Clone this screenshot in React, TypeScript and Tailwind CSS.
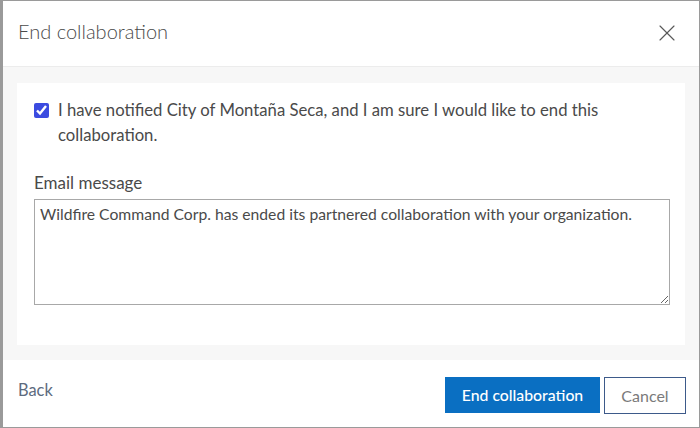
import { X } from "lucide-react";

export default function App() {
  return (
    <div
      className="flex h-[428px] w-[700px] flex-col border border-l-[3px] border-[#9a9a9a] bg-white text-[#4a4a4a]"
      style={{ fontFamily: "Lato, 'Open Sans', sans-serif" }}
    >
      <div className="flex h-[66px] shrink-0 items-center justify-between border-b border-[#ececec] pl-[15px] pr-[18px]">
        <h1 className="mb-[5px] text-[20px] font-light text-[#4a4a4a]">End collaboration</h1>
        <X className="mb-[2px] h-[28px] w-[28px] text-[#595959]" strokeWidth={1} />
      </div>

      <div className="h-[293px] shrink-0 bg-[#f7f7f7] px-[14px] pt-[16px] pb-[15px]">
        <div className="h-full bg-white pl-[17px] pr-[16px] pt-[15px]">
          <label className="flex items-start gap-[9px]">
            <input
              type="checkbox"
              defaultChecked
              className="mt-[5px] h-[15px] w-[15px] shrink-0 accent-[#3b4be0]"
            />
            <span className="text-[16.7px] leading-[25px]">
              I have notified City of Montaña Seca, and I am sure I would like to end this collaboration.
            </span>
          </label>

          <div className="mt-[24px] text-[17px] leading-[22px]">Email message</div>
          <textarea
            className="mt-[5px] block h-[106px] w-[636px] border border-[#a8a8a8] px-[5px] py-[3px] text-[15.7px] leading-[22px] text-[#4a4a4a] outline-none"
            defaultValue="Wildfire Command Corp. has ended its partnered collaboration with your organization."
          />
        </div>
      </div>

      <div className="flex flex-1 items-center justify-between pl-[15px] pr-[13px]">
        <span className="mb-[6px] text-[16.4px] text-[#5d6b7e]">Back</span>
        <div className="mt-[4px] flex gap-[4px]">
          <button className="h-[36px] w-[155px] bg-[#0a6fc2] text-[15.8px] font-medium text-white">
            End collaboration
          </button>
          <button className="h-[37px] w-[82px] border border-[#3d5a8a] bg-white text-[16px] text-[#7a7a7a]">
            Cancel
          </button>
        </div>
      </div>
    </div>
  );
}
